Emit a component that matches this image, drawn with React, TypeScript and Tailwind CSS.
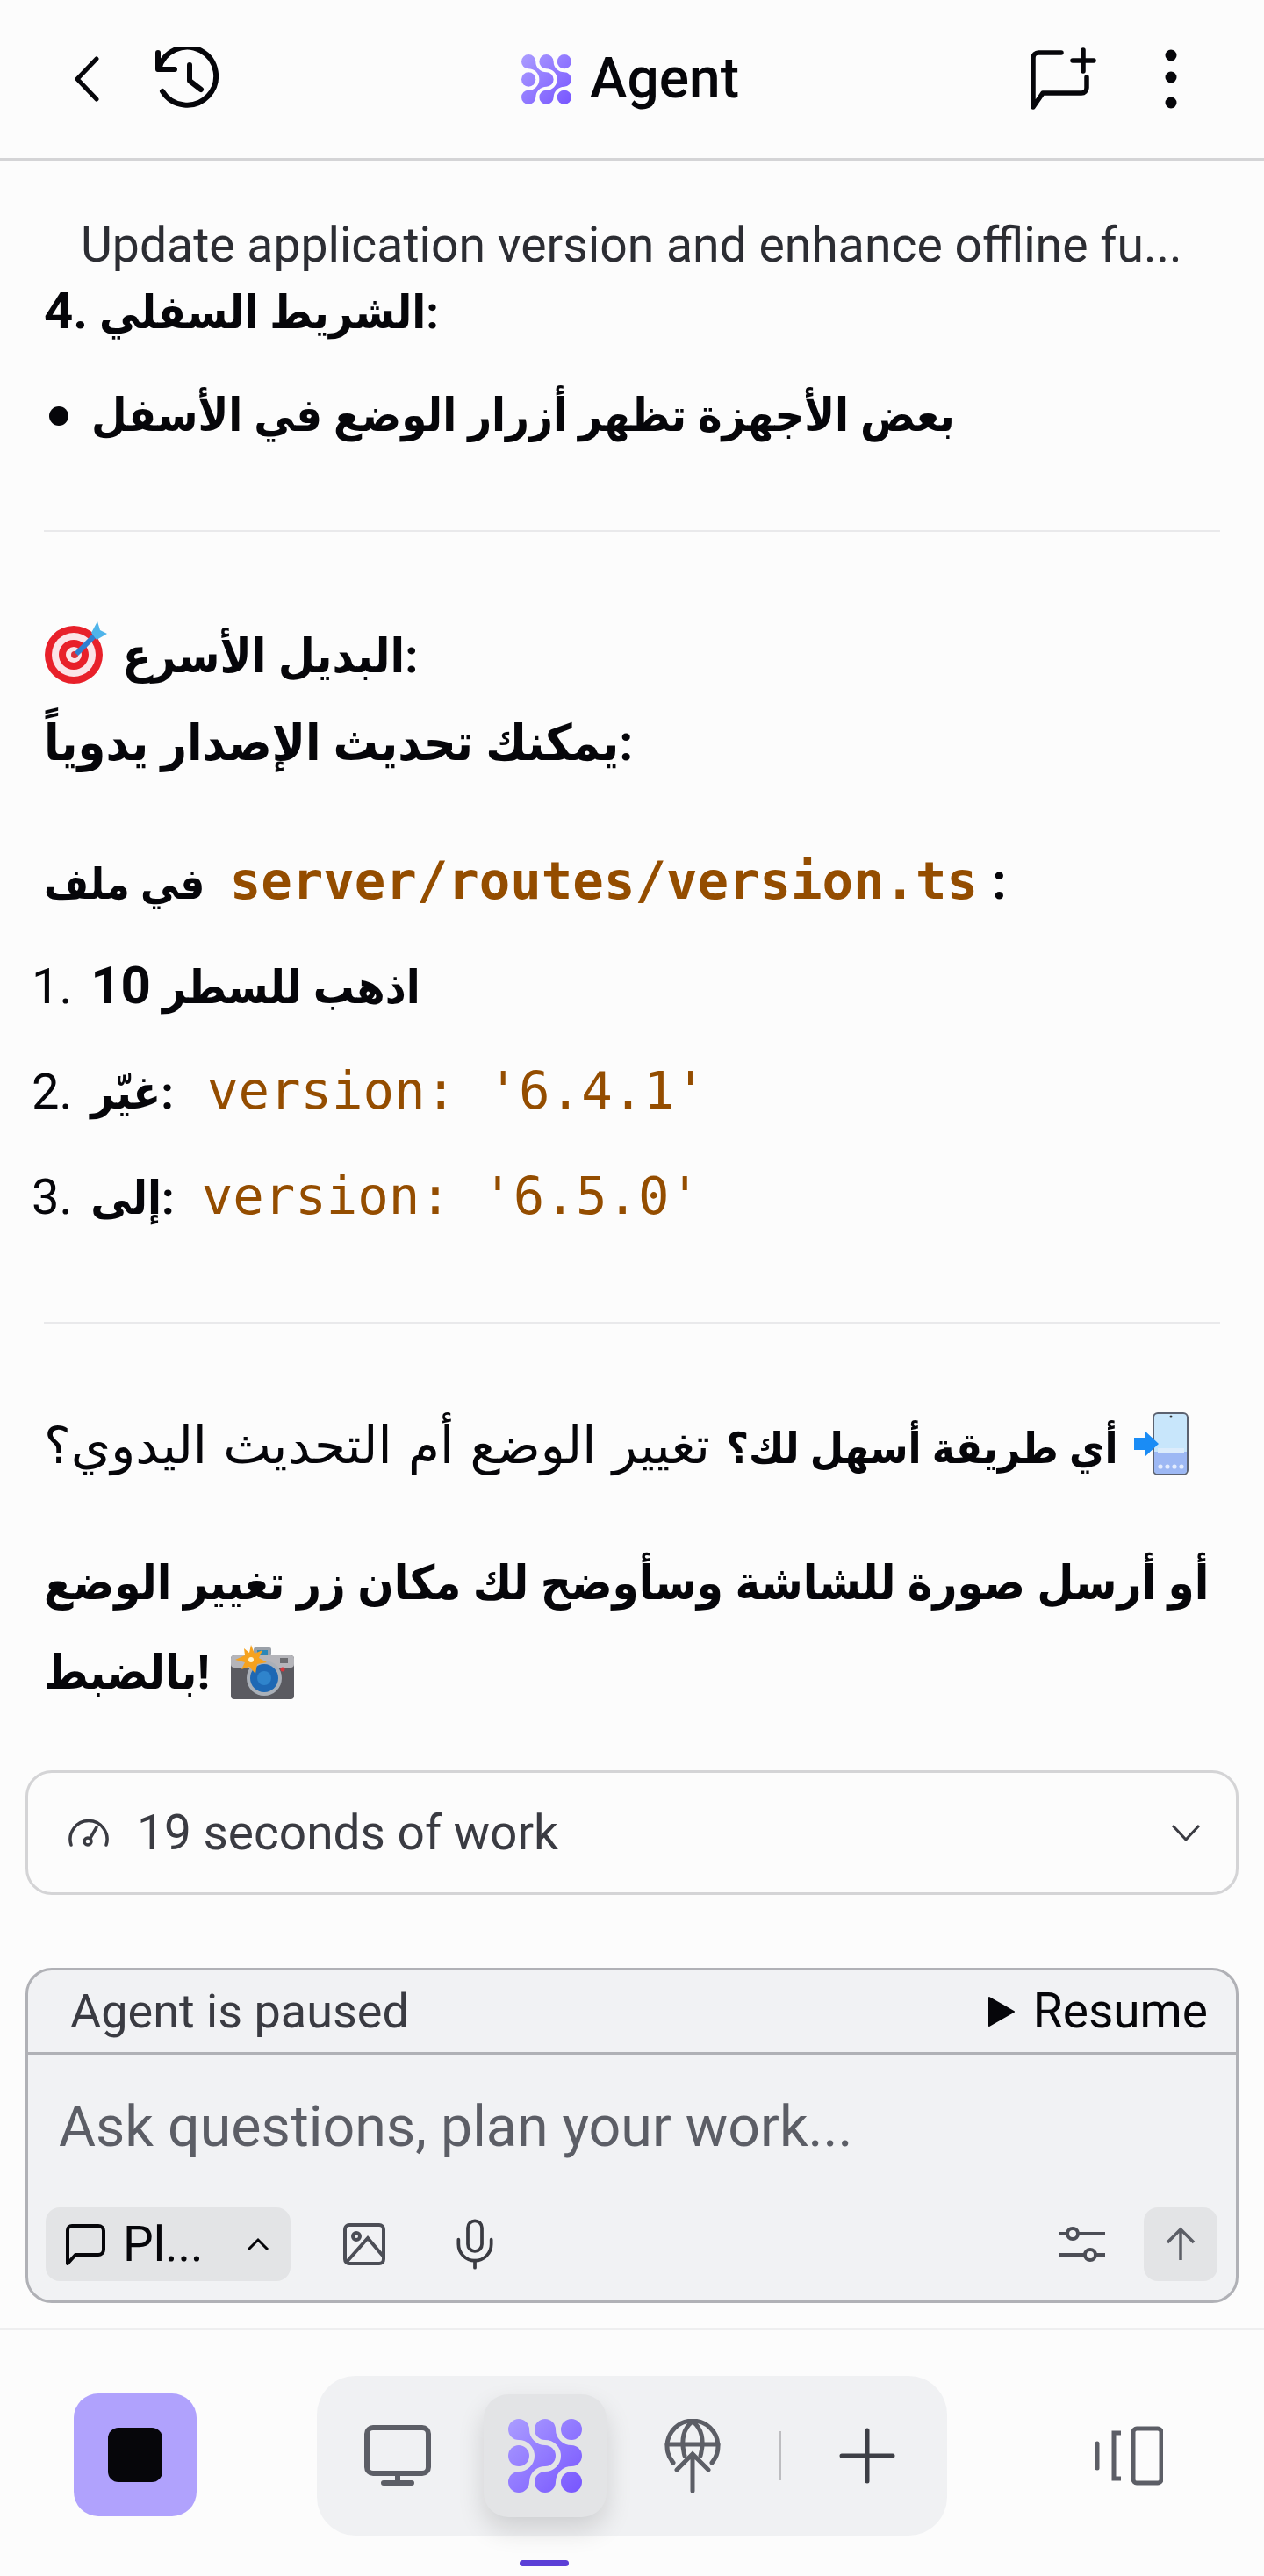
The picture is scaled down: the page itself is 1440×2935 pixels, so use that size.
import { useId } from "react";
import { Mic } from "lucide-react";

const uiFont = "font-['Roboto','DejaVu_Sans_Condensed','DejaVu_Sans',sans-serif]";
const mono = "font-['DejaVu_Sans_Mono',monospace]";

function AgentLogo({ size }: { size: number }) {
  const id = useId();
  return (
    <svg width={size} height={size} viewBox="0 0 84 84" fill={`url(#${id})`}>
      <defs>
        <linearGradient id={id} x1="0" y1="0" x2="84" y2="84" gradientUnits="userSpaceOnUse">
          <stop offset="0" stopColor="#ab9dff" />
          <stop offset="1" stopColor="#7755ff" />
        </linearGradient>
      </defs>
      <path d="M12 0A12 12 0 0 1 24 12A18 18 0 0 0 42 30A12 12 0 0 1 42 54A18 18 0 0 0 24 72A12 12 0 1 1 12 60A18 18 0 0 0 12 24A12 12 0 0 1 12 0Z" />
      <path d="M42 0A12 12 0 0 1 54 12A18 18 0 0 0 72 30A12 12 0 0 1 72 54A18 18 0 0 0 54 72A12 12 0 1 1 42 60A18 18 0 0 0 42 24A12 12 0 0 1 42 0Z" />
      <circle cx="12" cy="42" r="12" />
      <circle cx="72" cy="12" r="12" />
      <circle cx="72" cy="72" r="12" />
    </svg>
  );
}

function TargetEmoji() {
  return (
    <svg width="72" height="72" viewBox="0 0 72 72" className="mr-[4px] inline-block align-[-14px]">
      <circle cx="34" cy="38" r="33" fill="#e8202a" />
      <circle cx="34" cy="38" r="25" fill="#fbe4e8" />
      <circle cx="34" cy="38" r="17" fill="#e8202a" />
      <circle cx="34" cy="38" r="9" fill="#fbe4e8" />
      <circle cx="35" cy="38" r="4" fill="#d9303a" />
      <path d="M37 37 L58 16" stroke="#2f7fd0" strokeWidth="6" />
      <path d="M54 13 L61 0 L64 10 L72 14 L60 21 Z" fill="#4fb4ea" />
    </svg>
  );
}

function PhoneEmoji() {
  return (
    <svg width="62" height="72" viewBox="0 0 62 72" className="inline-block align-[-14px]">
      <rect x="22" y="1" width="39" height="70" rx="5" fill="#c8e6fb" stroke="#5c6270" strokeWidth="2" />
      <path d="M23 45 H60 V66 a4 4 0 0 1 -4 4 H27 a4 4 0 0 1 -4 -4 Z" fill="#9db8f4" />
      <rect x="27" y="41" width="30" height="5" fill="#dcecfb" />
      <circle cx="42" cy="5" r="1.5" fill="#333" />
      <circle cx="30" cy="62" r="2.6" fill="#e4ecfd" />
      <circle cx="38" cy="62" r="2.6" fill="#e4ecfd" />
      <circle cx="46" cy="62" r="2.6" fill="#e4ecfd" />
      <circle cx="54" cy="62" r="2.6" fill="#e4ecfd" />
      <path d="M0 29 H12 V21 L28 36 L12 51 V43 H0 Z" fill="#1a8cf5" />
    </svg>
  );
}

function CameraEmoji() {
  return (
    <svg width="72" height="62" viewBox="0 0 72 62" className="ml-[10px] inline-block align-[-12px]">
      <rect x="26" y="3" width="20" height="10" rx="2" fill="#9aa0a8" />
      <rect x="30" y="6" width="12" height="6" fill="#2b87b8" />
      <rect x="0" y="12" width="72" height="50" rx="4" fill="#5a5a60" />
      <rect x="0" y="12" width="72" height="14" rx="4" fill="#b5b5ba" />
      <rect x="56" y="15" width="9" height="6" fill="#6c6c70" />
      <circle cx="59" cy="28" r="2.5" fill="#d8353b" />
      <circle cx="38" cy="38" r="20" fill="#aab0b8" />
      <circle cx="38" cy="38" r="16" fill="#1e68b4" />
      <circle cx="38" cy="38" r="8" fill="#2f84cc" />
      <path d="M23 0 L27 10 L36 6 L32 15 L41 20 L30 22 L28 33 L21 25 L12 28 L16 20 L5 17 L16 12 L15 4 L21 9 Z" fill="#f6a21e" />
      <circle cx="23" cy="17" r="3" fill="#fff4d0" />
    </svg>
  );
}

function Hr() {
  return <hr className="mx-[50px] border-t-[2px] border-[#e9e9eb]" />;
}

function Code({ children, className }: { children: string; className?: string }) {
  return <code className={`${mono} ${className} text-[59px] leading-none text-[#944d00]`}>{children}</code>;
}

function Marker({ children }: { children: string }) {
  return <span className="mr-[8px] text-[56px] leading-none">{children}</span>;
}

function Message() {
  return (
    <div className="flex flex-col text-[54px] text-[#06060a]">
      <p className="mt-[-3px] h-[56px] whitespace-nowrap px-[92px] text-[55.3px] leading-[56px] text-[#2c2d33]">
        Update application version and enhance offline fu...
      </p>
      <p className="mt-[13px] px-[50px] text-[52px] font-bold leading-[72px]">
        <span className="text-[58px] leading-none">4.</span> الشريط السفلي:
      </p>
      <div className="mt-[45px] flex items-center gap-[26px] pl-[56px] leading-[72px]">
        <span className="size-[22px] rounded-full bg-[#06060a]" />
        <span className="text-[52px] font-bold">بعض الأجهزة تظهر أزرار الوضع في الأسفل</span>
      </div>
      <div className="mt-[94px]">
        <Hr />
      </div>
      <p className="mt-[102px] px-[50px] font-bold leading-[72px]">
        <TargetEmoji /> البديل الأسرع:
      </p>
      <p className="mt-[27px] px-[50px] text-[57px] font-bold leading-[72px]">يمكنك تحديث الإصدار يدوياً:</p>
      <p className="mt-[89px] px-[50px] text-[49px] font-bold leading-[72px]">
        في ملف <Code className="px-[16px] font-bold">server/routes/version.ts</Code>
        <span className="text-[58px] leading-none">:</span>
      </p>
      <ol className="mt-[46px] flex flex-col gap-[48px] pl-[36px] text-[52px] leading-[72px]">
        <li>
          <Marker>1.</Marker> <b>اذهب للسطر <span className="text-[60px] leading-none">10</span></b>
        </li>
        <li>
          <Marker>2.</Marker> <b>غيّر:</b> <Code className="ml-[25px]">version: '6.4.1'</Code>
        </li>
        <li>
          <Marker>3.</Marker> <b>إلى:</b> <Code className="ml-[18px]">version: '6.5.0'</Code>
        </li>
      </ol>
      <div className="mt-[104px]">
        <Hr />
      </div>
      <p className="mt-[101px] px-[50px] font-['DejaVu_Sans',sans-serif] text-[58px] leading-[72px]">
        <b className={`${uiFont} text-[49px]`}>أي طريقة أسهل لك؟</b> تغيير الوضع أم التحديث اليدوي؟ <PhoneEmoji />
      </p>
      <p className="mt-[66px] px-[50px] font-bold leading-[102px]">
        أو أرسل صورة للشاشة وسأوضح لك مكان زر تغيير الوضع بالضبط! <CameraEmoji />
      </p>
    </div>
  );
}

function InputCard() {
  return (
    <div className="mx-[29px] mt-[83px] flex h-[382px] flex-col rounded-[30px] border-[3px] border-[#b0b1b6] bg-[#f1f2f4]">
      <div className="flex h-[96px] items-center justify-between border-b-[3px] border-[#b0b1b6] pl-[48px] pr-[32px]">
        <span className="text-[54px] text-[#3a3b42]">Agent is paused</span>
        <span className="flex items-center gap-[20px] text-[55px] text-[#06060a]">
          <svg width="32" height="36" viewBox="0 0 32 36">
            <path d="M2 2 L30 18 L2 34 Z" fill="#06060a" stroke="#06060a" strokeWidth="2" strokeLinejoin="round" />
          </svg>
          Resume
        </span>
      </div>
      <div className="flex flex-1 flex-col justify-between pb-[22px] pl-[20px] pr-[21px] pt-[42px]">
        <span className="pl-[15px] text-[64.5px] leading-[80px] text-[#5c5e66]">Ask questions, plan your work...</span>
        <div className="flex items-center">
          <div className="flex h-[84px] w-[279px] items-center rounded-[16px] bg-[#e3e4e6] pl-[20px]">
            <svg width="50" height="48" viewBox="0 0 50 48" fill="none" stroke="#06060a" strokeWidth="4">
              <path d="M10 3 H40 a6 6 0 0 1 6 6 V30 a6 6 0 0 1 -6 6 H14 L5 46 V8 a5 5 0 0 1 5 -5 Z" strokeLinejoin="round" />
            </svg>
            <span className="ml-[18px] w-[88px] text-[55px] text-[#06060a]">Pl...</span>
            <svg className="ml-[53px]" width="26" height="16" viewBox="0 0 26 16" fill="none" stroke="#06060a" strokeWidth="3">
              <path d="M2 14 L13 3 L24 14" />
            </svg>
          </div>
          <svg className="ml-[60px]" width="48" height="48" viewBox="0 0 48 48" fill="none" stroke="#4c4e56" strokeWidth="4">
            <rect x="2" y="2" width="44" height="44" rx="5" />
            <circle cx="15" cy="15" r="4" />
            <path d="M4 44 L28 17 L45 37" />
          </svg>
          <Mic className="ml-[70px]" size={64} strokeWidth={1.4} color="#3a3b42" />
          <svg className="ml-auto" width="52" height="44" viewBox="0 0 52 44" fill="none" stroke="#4c4e56" strokeWidth="4">
            <circle cx="15" cy="10" r="6" />
            <path d="M21 10 H52 M0 10 H9" />
            <circle cx="35" cy="34" r="6" />
            <path d="M0 34 H29 M41 34 H52" />
          </svg>
          <div className="ml-[44px] flex h-[84px] w-[84px] items-center justify-center rounded-[16px] bg-[#e3e4e6]">
            <svg width="36" height="40" viewBox="0 0 36 40" fill="none" stroke="#5c5e66" strokeWidth="3.5">
              <path d="M18 38 V3 M3 18 L18 3 L33 18" />
            </svg>
          </div>
        </div>
      </div>
    </div>
  );
}

function BottomNav() {
  return (
    <div className="relative mt-[28px] flex h-[281px] items-start border-t-[3px] border-[#eeeeef] pt-[52px]">
      <div className="ml-[84px] mt-[20px] flex size-[140px] items-center justify-center rounded-[28px] bg-[#b0a2fd]">
        <span className="size-[62px] rounded-[12px] bg-[#06060a]" />
      </div>
      <div className="ml-[137px] flex h-[182px] w-[718px] items-center rounded-[44px] bg-[#f0f1f3]">
        <svg className="ml-[54px]" width="76" height="70" viewBox="0 0 76 70" fill="none" stroke="#5c5e66" strokeWidth="6">
          <rect x="3" y="3" width="70" height="52" rx="7" />
          <path d="M38 55 V66 M22 66 H54" strokeLinecap="round" />
        </svg>
        <div className="ml-[60px] flex size-[140px] items-center justify-center rounded-[28px] bg-[#e3e4e6] shadow-[0_14px_30px_rgba(0,0,0,0.14)]">
          <AgentLogo size={84} />
        </div>
        <svg className="ml-[66px]" width="64" height="84" viewBox="0 0 64 84" fill="none" stroke="#5c5e66" strokeWidth="5" strokeLinecap="round">
          <path d="M10 50 A29 29 0 1 1 54 50" />
          <path d="M3 29 H61" />
          <path d="M23 42 C18 24 22 10 32 3 C42 10 46 24 41 42" />
          <path d="M32 40 V82 M14 58 L32 40 L50 58" />
        </svg>
        <span className="ml-[66px] h-[56px] w-[3px] bg-[#bdbdc0]" />
        <svg className="ml-[66px]" width="64" height="64" viewBox="0 0 64 64" fill="none" stroke="#3d3f46" strokeWidth="5" strokeLinecap="round">
          <path d="M32 3 V61 M3 32 H61" />
        </svg>
      </div>
      <svg className="ml-[168px] mt-[57px]" width="78" height="68" viewBox="0 0 78 68" fill="none" stroke="#5c5e66" strokeWidth="5">
        <rect x="44" y="3" width="32" height="62" rx="4" />
        <path d="M30 8 H22 V60 H30" />
        <path d="M3 20 V48" strokeLinecap="round" />
      </svg>
      <span className="absolute left-[592px] top-[262px] h-[7px] w-[56px] rounded-full bg-[#5b3fd6]" />
    </div>
  );
}

export default function App() {
  return (
    <div className={`${uiFont} flex h-[2935px] flex-col overflow-hidden bg-[#fcfcfc]`}>
      <header className="flex h-[183px] shrink-0 items-center border-b-[3px] border-[#d4d4d6]">
        <svg className="ml-[84px]" width="30" height="52" viewBox="0 0 30 52" fill="none" stroke="#06060a" strokeWidth="5" strokeLinejoin="round" strokeLinecap="round">
          <path d="M26 3 L4 26 L26 49" />
        </svg>
        <svg className="ml-[61px]" width="80" height="72" viewBox="0 0 80 72" fill="none" stroke="#06060a" strokeWidth="6" strokeLinecap="round" strokeLinejoin="round">
          <path d="M5 6 V25 H24" />
          <path d="M6 25 A33 33 0 1 1 10 50" />
          <path d="M41 20 V38 L54 48" />
        </svg>
        <div className="ml-[339px] flex items-center gap-[21px]">
          <AgentLogo size={57} />
          <span className="w-[172px] text-[64px] font-medium leading-none text-[#06060a]">Agent</span>
        </div>
        <svg className="ml-[330px]" width="76" height="72" viewBox="0 0 76 72" fill="none" stroke="#06060a" strokeWidth="5.5" strokeLinecap="round">
          <path d="M35 6 H9 a6 6 0 0 0 -6 6 V68 L14 52 H58 a6 6 0 0 0 6 -6 V34" strokeLinejoin="round" />
          <path d="M60 3 V27 M48 15 H72" />
        </svg>
        <svg className="ml-[77px]" width="14" height="68" viewBox="0 0 14 68">
          <circle cx="7" cy="7" r="6.5" fill="#06060a" />
          <circle cx="7" cy="32" r="6.5" fill="#06060a" />
          <circle cx="7" cy="61" r="6.5" fill="#06060a" />
        </svg>
      </header>

      <main className="flex flex-1 flex-col pt-[72px]">
        <Message />

        <div className="mx-[29px] mt-[60px] flex h-[142px] items-center rounded-[30px] border-[3px] border-[#d4d4d6] pl-[44px] pr-[40px]">
          <svg width="50" height="32" viewBox="0 0 50 32" fill="none" stroke="#3a3b42" strokeWidth="3.5">
            <path d="M5 30 A21 21 0 1 1 45 30" strokeLinecap="round" />
            <circle cx="24" cy="26" r="4" />
            <path d="M27 22 L34 10" strokeLinecap="round" />
          </svg>
          <span className="ml-[30px] text-[55px] text-[#3a3b42]">19 seconds of work</span>
          <svg className="ml-auto" width="34" height="20" viewBox="0 0 34 20" fill="none" stroke="#3a3b42" strokeWidth="3">
            <path d="M2 2 L17 18 L32 2" />
          </svg>
        </div>

        <InputCard />
        <BottomNav />
      </main>
    </div>
  );
}
